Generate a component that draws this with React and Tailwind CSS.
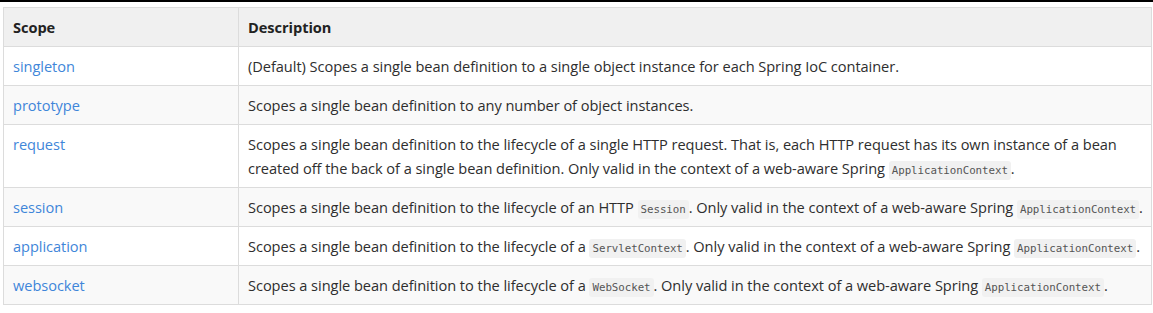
const rows = [
  {
    scope: "singleton",
    desc: <>(Default) Scopes a single bean definition to a single object instance for each Spring IoC container.</>,
  },
  {
    scope: "prototype",
    desc: <>Scopes a single bean definition to any number of object instances.</>,
  },
  {
    scope: "request",
    desc: (
      <>
        Scopes a single bean definition to the lifecycle of a single HTTP request. That is, each HTTP request has its own instance of a bean
        <br />
        created off the back of a single bean definition. Only valid in the context of a web-aware Spring <Code>ApplicationContext</Code>.
      </>
    ),
  },
  {
    scope: "session",
    desc: (
      <>
        Scopes a single bean definition to the lifecycle of an HTTP <Code>Session</Code>. Only valid in the context of a web-aware Spring <Code>ApplicationContext</Code>.
      </>
    ),
  },
  {
    scope: "application",
    desc: (
      <>
        Scopes a single bean definition to the lifecycle of a <Code>ServletContext</Code>. Only valid in the context of a web-aware Spring <Code>ApplicationContext</Code>.
      </>
    ),
  },
  {
    scope: "websocket",
    desc: (
      <>
        Scopes a single bean definition to the lifecycle of a <Code>WebSocket</Code>. Only valid in the context of a web-aware Spring <Code>ApplicationContext</Code>.
      </>
    ),
  },
];

function Code({ children }) {
  return (
    <code className="rounded-[3px] bg-[#f1f1f1] px-[3px] py-[3px] font-['DejaVu_Sans_Mono',monospace] text-[10.8px] leading-none text-[#555]">
      {children}
    </code>
  );
}

function App() {
  return (
    <div className="h-[313px] w-[1153px] overflow-hidden bg-white font-['Open_Sans',sans-serif] text-[14.6px] tracking-[-0.05px] text-[#2e2e2e]">
      <div className="h-[2px] w-full bg-black" />
      <div className="pl-[3px] pt-[5px]">
        <table className="w-[1149px] table-fixed border-collapse">
          <thead>
            <tr className="bg-[#f0f0f0]">
              <th className="w-[235px] border border-[#dcdcdc] px-[9px] py-[8px] text-left font-bold leading-[22px] text-[#222]">
                Scope
              </th>
              <th className="border border-[#dcdcdc] px-[9px] py-[8px] text-left font-bold leading-[22px] text-[#222]">
                Description
              </th>
            </tr>
          </thead>
          <tbody>
            {rows.map((r, i) => (
              <tr key={r.scope} className={i % 2 === 1 ? "bg-[#f9f9f9]" : "bg-white"}>
                <td className="border border-[#dcdcdc] px-[9px] py-[7px] align-top leading-[24px] text-[#3f86d9]">
                  {r.scope}
                </td>
                <td className="whitespace-nowrap border border-[#dcdcdc] px-[9px] py-[7px] align-top leading-[24px]">
                  {r.desc}
                </td>
              </tr>
            ))}
          </tbody>
        </table>
      </div>
    </div>
  );
}

export default App;
